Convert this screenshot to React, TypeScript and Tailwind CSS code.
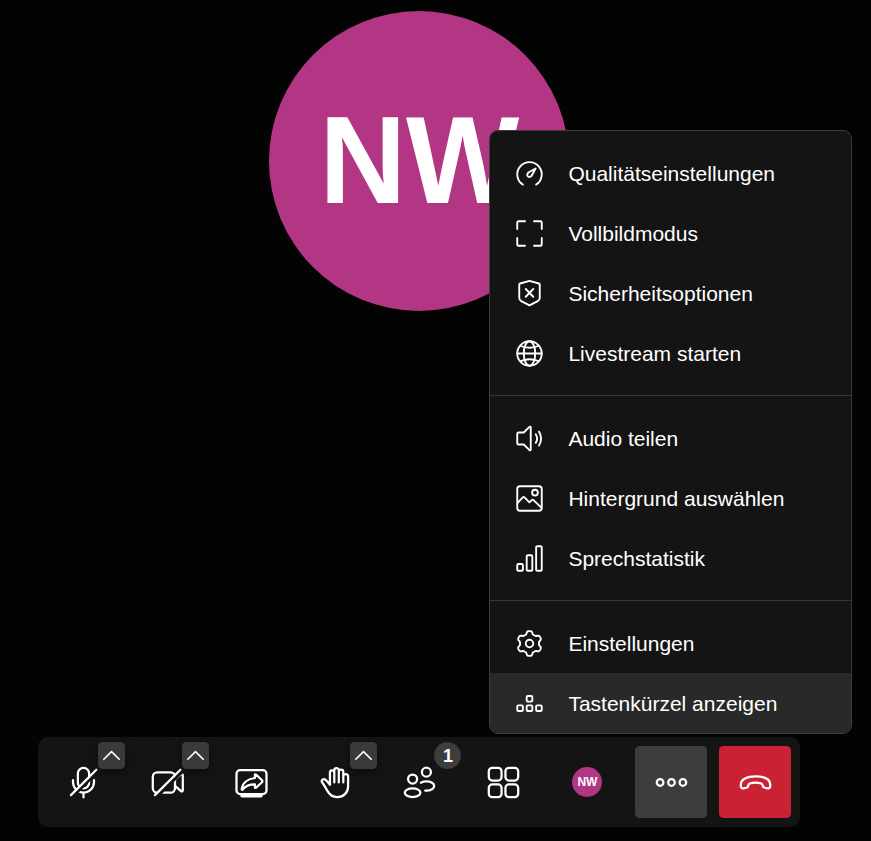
import type { ReactNode } from "react";

type IconProps = { children: ReactNode; small?: boolean };

function Icon({ children, small = false }: IconProps) {
  return (
    <svg
      viewBox={small ? "-0.4 -0.4 24 24" : "-0.33 -0.33 24 24"}
      fill="none"
      stroke="currentColor"
      strokeWidth="1.5"
      strokeLinecap="round"
      strokeLinejoin="round"
      className={small ? "size-[30px] shrink-0" : "size-9 shrink-0"}
    >
      {children}
    </svg>
  );
}

// Six-lobed outline for the settings gear.
const gearPath =
  Array.from({ length: 120 }, (_, i) => {
    const t = (i / 120) * Math.PI * 2;
    const r = 8.75 + 1.2 * Math.tanh(2 * Math.cos(6 * t));
    const x = 12 + r * Math.sin(t);
    const y = 12 - r * Math.cos(t);
    return `${i === 0 ? "M" : "L"}${x.toFixed(2)} ${y.toFixed(2)}`;
  }).join("") + "Z";

const menuGroups: { label: string; icon: ReactNode; active?: boolean }[][] = [
  [
    {
      label: "Qualitätseinstellungen",
      icon: (
        <>
          <path d="M6.7 20.9a9.8 9.8 0 1 1 10.6 0" />
          <path d="M16.9 8 11.4 11c-1.2.8-1.600 2.300-.8 3.200s2.500.7 3.200-.6Z" />
        </>
      ),
    },
    {
      label: "Vollbildmodus",
      icon: <path d="M8.4 2.2H3.2a1 1 0 0 0-1 1v5.2M15.6 2.2h5.2a1 1 0 0 1 1 1v5.2M2.2 15.6v5.2a1 1 0 0 0 1 1h5.2M21.8 15.6v5.2a1 1 0 0 1-1 1h-5.2" />,
    },
    {
      label: "Sicherheitsoptionen",
      icon: (
        <>
          <path d="M12 1.9 19.5 4a1 1 0 0 1 .7 1v10.6c0 1.3-.6 2-1.6 2.5L12 21.5l-6.6-3.4c-1-.5-1.6-1.2-1.6-2.5V5a1 1 0 0 1 .7-1Z" />
          <path d="m9 8.4 6 6.2M15 8.4l-6 6.2" />
        </>
      ),
    },
    {
      label: "Livestream starten",
      icon: (
        <>
          <circle cx="12" cy="12" r="9.8" />
          <ellipse cx="12" cy="12" rx="4.6" ry="9.8" />
          <path d="M2.2 12h19.6M4.5 5.8c4.4 1.9 10.6 1.9 15 0M4.5 18.2c4.4-1.9 10.6-1.9 15 0" />
        </>
      ),
    },
  ],
  [
    {
      label: "Audio teilen",
      icon: (
        <>
          <path d="M7.4 7.2 12 2.7c.4-.4 1-.2 1 .4v17.8c0 .6-.6.8-1 .4l-4.6-4.5H3.2a1 1 0 0 1-1-1V8.2a1 1 0 0 1 1-1Z" />
          <path d="M17 8.600c1.300 2 1.300 4.900 0 6.900M19.600 6.500c2.200 3.200 2.200 7.900 0 11.100" />
        </>
      ),
    },
    {
      label: "Hintergrund auswählen",
      icon: (
        <>
          <rect x="2.2" y="2.2" width="19.6" height="19.6" rx="2.2" />
          <circle cx="16.4" cy="7.3" r="2.3" />
          <path d="m2.5 15.5 4.1-4.4a1 1 0 0 1 1.4 0l3.9 4 1.9-1.8a1 1 0 0 1 1.4 0l6.3 6" />
        </>
      ),
    },
    {
      label: "Sprechstatistik",
      icon: (
        <>
          <rect x="2.2" y="16.4" width="4.5" height="5.4" rx=".9" />
          <rect x="9.75" y="9.4" width="4.5" height="12.4" rx=".9" />
          <rect x="17.3" y="2.2" width="4.5" height="19.6" rx=".9" />
        </>
      ),
    },
  ],
  [
    {
      label: "Einstellungen",
      icon: (
        <>
          <path d={gearPath} />
          <circle cx="12" cy="12" r="3" />
        </>
      ),
    },
    {
      label: "Tastenkürzel anzeigen",
      active: true,
      icon: (
        <>
          <rect x="9.75" y="6" width="4.5" height="4.5" rx=".9" />
          <rect x="2.2" y="13.5" width="4.5" height="4.5" rx=".9" />
          <rect x="9.75" y="13.5" width="4.5" height="4.5" rx=".9" />
          <rect x="17.3" y="13.5" width="4.5" height="4.5" rx=".9" />
        </>
      ),
    },
  ],
];

function OverflowMenu() {
  return (
    <div className="absolute left-[489.4px] top-[130.4px] w-[362.2px] overflow-hidden rounded-[9px] border border-[#3d3d3d] bg-[#141414]">
      {menuGroups.map((group, g) => (
        <div
          key={g}
          className={
            g === 0
              ? "py-3"
              : g === 1
                ? "border-t border-[#353535] py-3"
                : "border-t border-[#353535] pt-3"
          }
        >
          {group.map((item) => (
            <div
              key={item.label}
              className={
                item.active
                  ? "flex h-[60px] items-center gap-6 bg-[#292929] px-6"
                  : "flex h-[60px] items-center gap-6 px-6"
              }
            >
              <Icon small>{item.icon}</Icon>
              <span className="whitespace-nowrap pt-px text-[21px] leading-[30px]">{item.label}</span>
            </div>
          ))}
        </div>
      ))}
    </div>
  );
}

function ToolButton({ children, corner, tone = "" }: { children: ReactNode; corner?: ReactNode; tone?: string }) {
  return (
    <div className={`relative flex size-[72px] items-center justify-center rounded-[4.5px] ${tone}`}>
      {children}
      {corner}
    </div>
  );
}

function Chevron() {
  return (
    <div className="absolute -right-1.5 -top-1 flex size-[27px] items-center justify-center rounded-[4.5px] bg-[#3a3a3d] shadow-[0_3px_8px_rgba(0,0,0,0.4)]">
      <svg viewBox="0 0 27 27" className="size-[27px]" fill="none" stroke="white" strokeWidth="1.6" strokeLinecap="round" strokeLinejoin="round">
        <path d="m5.8 17.3 7.7-7.7 7.7 7.7" />
      </svg>
    </div>
  );
}

function Toolbar() {
  return (
    <div className="ml-[38.4px] flex w-[762px] gap-3 rounded-[10px] bg-[#141414] p-[9px]">
      <ToolButton corner={<Chevron />}>
        <Icon>
          <mask id="mic-cut" maskUnits="userSpaceOnUse" x="0" y="0" width="24" height="24">
            <rect width="24" height="24" fill="white" stroke="none" />
            <path d="M4.5 21.7 21.800 4.600" stroke="black" strokeWidth="1.800" />
          </mask>
          <g mask="url(#mic-cut)">
            <path d="M8.25 11.500V6a3.750 3.750 0 0 1 7.500 0v6.200a3.750 3.750 0 0 1-7.500 0Z" />
            <path d="M5 10.400v1.300a7 7 0 0 0 14 0v-1.300M12 18.800v3.200" />
          </g>
          <path d="M3.6 20.4 20.6 3.5" />
        </Icon>
      </ToolButton>
      <ToolButton corner={<Chevron />}>
        <Icon>
          <mask id="cam-cut" maskUnits="userSpaceOnUse" x="0" y="0" width="24" height="24">
            <rect width="24" height="24" fill="white" stroke="none" />
            <path d="M4.5 21.9 22 4.6" stroke="black" strokeWidth="2" />
          </mask>
          <g mask="url(#cam-cut)">
            <path d="M17 9.8V8.2a3 3 0 0 0-3-3H5.2a3 3 0 0 0-3 3v7.6a3 3 0 0 0 3 3H14a3 3 0 0 0 3-3v-1.6Z" />
            <path d="m17 9.8 4-3.2c.5-.4 1.2 0 1.2.6v10c0 .7-.7 1-1.2.6L17 14.2" />
          </g>
          <path d="M3.6 20.4 20.6 3.5" />
        </Icon>
      </ToolButton>
      <ToolButton>
        <Icon>
          <rect x="2" y="3.8" width="20" height="15.9" rx="2.4" />
          <path d="M5.6 20.9h12.8" strokeWidth="2.1" />
          <path d="M14.3 6.9c0-.4.4-.5.7-.2l4 3.8a.9.9 0 0 1 0 1.3l-4 3.7c-.3.3-.7.1-.7-.2v-2c-3.7-.1-6 .8-8 3.3-.4.5-.9.3-.8-.3.6-3.9 3.8-6.8 8.8-7.3Z" />
        </Icon>
      </ToolButton>
      <ToolButton corner={<Chevron />}>
        <Icon>
          <path d="M8.3 13.6V5.3a1.45 1.45 0 0 1 2.9 0V12M11.2 12V3.9a1.5 1.5 0 0 1 3 0V12M14.2 12V5a1.5 1.5 0 0 1 3 0v7M17.2 12V8a1.6 1.6 0 0 1 3.2 0v6.6c0 4.2-3.1 7.1-7.2 7.1-3.2 0-5.2-1.6-6.7-4.3-1-1.8-2-3.6-3.3-5.4-1.1-1.6.8-3 2.2-1.7 1.1 1 2 2.1 2.9 3.3" />
        </Icon>
      </ToolButton>
      <ToolButton
        corner={
          <div className="absolute -right-1.5 -top-1 flex size-[27px] items-center justify-center rounded-full bg-[#3d3d3d] text-[18px] font-bold leading-none">
            1
          </div>
        }
      >
        <Icon>
          <circle cx="7.4" cy="9.7" r="3" />
          <ellipse cx="7.4" cy="18.8" rx="5.2" ry="2.9" />
          <circle cx="16.6" cy="5.1" r="3" />
          <path d="M12.9 12.1c1-.5 2.3-.8 3.700-.8 3 0 5.200 1.300 5.200 3s-2.200 3.100-5.200 3.100h-.8" />
        </Icon>
      </ToolButton>
      <ToolButton>
        <Icon>
          <rect x="2.2" y="2.2" width="8.5" height="8.5" rx="2.3" />
          <rect x="13.3" y="2.2" width="8.5" height="8.5" rx="2.3" />
          <rect x="2.2" y="13.3" width="8.5" height="8.5" rx="2.3" />
          <rect x="13.3" y="13.3" width="8.5" height="8.5" rx="2.3" />
        </Icon>
      </ToolButton>
      <ToolButton>
        <div className="flex size-[30px] items-center justify-center rounded-full bg-[#b23683] text-[12px] font-bold leading-none">
          NW
        </div>
      </ToolButton>
      <ToolButton tone="bg-[#3d3d3d]">
        <Icon>
          <circle cx="4.4" cy="12" r="2.2" />
          <circle cx="12" cy="12" r="2.2" />
          <circle cx="19.6" cy="12" r="2.2" />
        </Icon>
      </ToolButton>
      <ToolButton tone="bg-[#cb2233]">
        <Icon>
          <path d="M12 8C6.5 8 2.2 9.6 2.2 13.4v1.1c0 .9.8 1.6 1.7 1.4l2-.4c.8-.2 1.2-.7 1.3-1.5.1-1.2 2.4-1.9 4.8-1.9s4.7.7 4.8 1.9c.1.8.5 1.3 1.3 1.5l2 .4c.9.2 1.7-.5 1.7-1.4v-1.1C21.8 9.6 17.5 8 12 8Z" />
        </Icon>
      </ToolButton>
    </div>
  );
}

export default function App() {
  return (
    <main className="relative flex h-[841px] w-[871px] flex-col justify-between overflow-hidden bg-[#030303] pb-[13.6px] pt-[11.4px] font-['Liberation_Sans',Arial,sans-serif] text-white">
      <div className="ml-[269.4px] flex size-[300px] items-center justify-center rounded-full bg-[#b23683]">
        <span className="origin-center -translate-y-[2px] scale-y-[1.04] text-[120px] font-bold leading-none">NW</span>
      </div>
      <Toolbar />
      <OverflowMenu />
    </main>
  );
}
